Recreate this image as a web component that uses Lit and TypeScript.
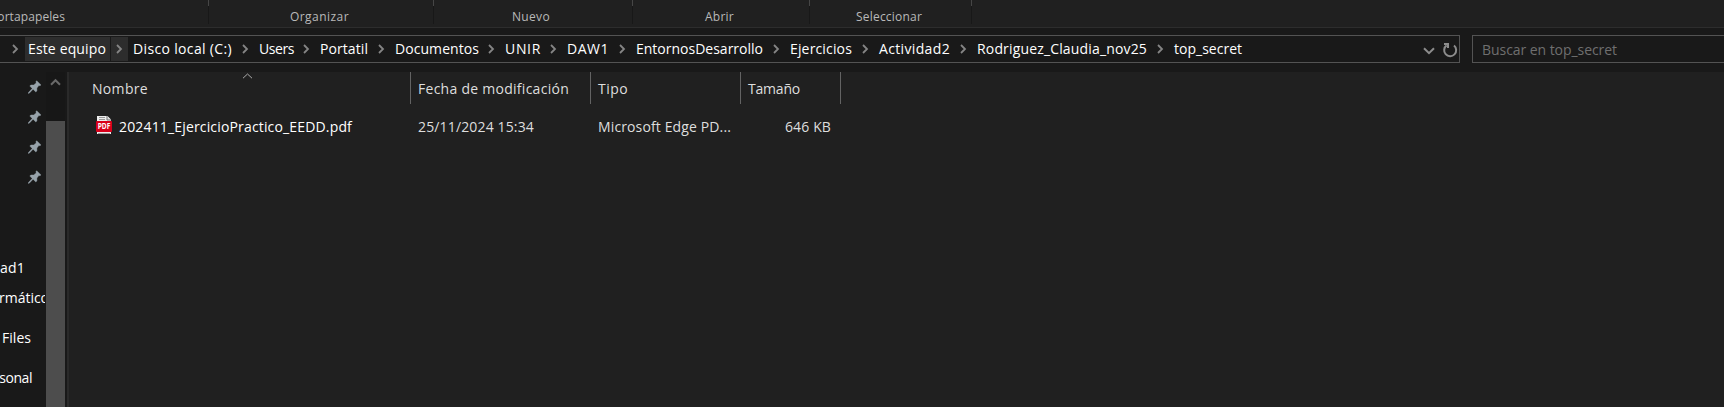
import { LitElement, html, css, svg } from "lit";
import { customElement, property } from "lit/decorators.js";

/** A line of text whose letter spacing is tuned to fill a given advance. */
@customElement("fit-text")
class FitText extends LitElement {
  static styles = css`
    :host { display: block; flex: none; white-space: pre; }
    span { display: inline-block; }
  `;
  @property() text = "";
  @property({ type: Number }) fit = 0;
  updated() {
    const s = this.renderRoot.querySelector("span") as HTMLElement;
    s.style.letterSpacing = "0px";
    const n = s.getBoundingClientRect().width;
    if (this.fit && n) s.style.letterSpacing = `${(this.fit - n) / this.text.length}px`;
  }
  render() { return html`<span>${this.text}</span>`; }
}

const groups = [
  { t: "Portapapeles", w: 209, f: 75, l: -10 },
  { t: "Organizar", w: 225, f: 59, l: 81 },
  { t: "Nuevo", w: 199, f: 38, l: 78 },
  { t: "Abrir", w: 177, f: 29, l: 72 },
  { t: "Seleccionar", w: 162, f: 66, l: 46 },
];
const crumbs = [
  { t: "Este equipo", x: 28, f: 78 },
  { t: "Disco local (C:)", x: 133, f: 99 },
  { t: "Users", x: 259, f: 35 },
  { t: "Portatil", x: 320, f: 48 },
  { t: "Documentos", x: 395, f: 84 },
  { t: "UNIR", x: 505, f: 36 },
  { t: "DAW1", x: 567, f: 42 },
  { t: "EntornosDesarrollo", x: 636, f: 127 },
  { t: "Ejercicios", x: 790, f: 62 },
  { t: "Actividad2", x: 879, f: 71 },
  { t: "Rodriguez_Claudia_nov25", x: 977, f: 170 },
  { t: "top_secret", x: 1174, f: 68 },
];
const side = [
  { t: "ad1", f: 25, l: 0, h: 30 },
  { t: "rmático", f: 50, l: -1, h: 40 },
  { t: "Files", f: 29, l: 2, h: 40 },
  { t: "rsonal", f: 38, l: -6, h: 40 },
];

const chevron = svg`<svg width="7" height="10" viewBox="0 0 7 10"><path d="M1 1l4 4-4 4" fill="none" stroke="#858585" stroke-width="1.8"/></svg>`;
const pin = svg`<svg width="14" height="14" viewBox="0 0 14 14"><path d="M8.7 0.7L13 4.9L11.9 5.7L10.9 5.5L8.9 8L8.9 11L7.8 11.9L5.1 9.3L1 13.4L0.3 13.3L0.4 12.6L4.2 8.5L1.8 6L2.8 5L5.7 4.9L8.2 2.9L8 1.5Z" fill="#98a3ab" stroke="#98a3ab" stroke-width=".4"/></svg>`;

@customElement("app-root")
class AppRoot extends LitElement {
  static styles = css`
    :host { display: flex; flex-direction: column; height: 407px; overflow: hidden; background: #202020;
      color: #fff; font: 14px/20px "Open Sans", "Noto Sans", sans-serif; }
    * { box-sizing: border-box; }
    svg { display: block; flex: none; }
    .ribbon { height: 28px; display: flex; border-bottom: 1px solid #2d2d2d; background: #202020; font-size: 12px; color: #b9b9b9; flex: none; }
    .group { display: flex; justify-content: space-between; padding-top: 7px; }
    .rule { width: 1px; height: 24px; margin-top: -7px; background: linear-gradient(#464646 6px, #181818 6px); }
    .nav { height: 44px; flex: none; display: flex; padding-top: 7px; background: #191919; }
    .address { width: 1460px; height: 28px; border: 1px solid #535353; border-left: 0; display: flex; }
    .lead { width: 25px; padding: 8px 0 0 12px; }
    .crumb { display: flex; height: 24px; margin-top: 1px; padding: 2px 7px 0 3px; }
    .crumb.hot { background: linear-gradient(90deg, #2d2d2d 85px, #191919 85px, #191919 86px, #2d2d2d 86px, #2d2d2d 103px, #191919 103px); }
    .crumb svg { margin: 5px 0 0 auto; }
    .tools { margin-left: auto; display: flex; padding-right: 1px; }
    .down { margin: 11px 7px 0 0; }
    .reload { margin-top: 6px; }
    .search { flex: 1; margin-left: 12px; height: 28px; border: 1px solid #535353; border-right: 0; padding: 4px 0 0 9px; color: #6f6f6f; }
    .body { display: flex; flex: 1; min-height: 0; }
    .tree { width: 45px; background: #191919; overflow: hidden; }
    .pins { padding: 8px 0 0 28px; height: 186px; display: flex; flex-direction: column; gap: 16px; }
    .scroll { width: 22px; padding-left: 1px; background: #191919; border-right: 2px solid #191919; display: flex; flex-direction: column; }
    .scroll > div { background: #171717; height: 49px; padding: 6px 0 0 4px; flex: none; }
    .scroll > i { flex: 1; background: #4d4d4d; }
    .edge { width: 2px; background: #2a2a2a; }
    .list { flex: 1; }
    .head { display: flex; height: 32px; color: #dedede; }
    .col { border-right: 1px solid #636363; padding: 7px 0 0 7px; display: flex; }
    .name { width: 342px; padding-left: 23px; }
    .sort { margin: -6px 0 0 94px; }
    .row { display: flex; height: 38px; padding: 13px 0 0 27px; color: #dedede; }
    .file { width: 322px; display: flex; gap: 6px; color: #fff; }
    .file svg { margin-top: -1px; }
    .file fit-text { margin-left: 1px; }
    .date { width: 180px; }
    .type { width: 187px; }
  `;
  render() {
    return html`
      <div class="ribbon">${groups.map((g) => html`<div class="group" style="width:${g.w - Math.min(g.l, 0)}px;padding-left:${Math.max(g.l, 0)}px;margin-left:${Math.min(g.l, 0)}px"><fit-text .text=${g.t} .fit=${g.f}></fit-text><i class="rule"></i></div>`)}</div>
      <div class="nav">
        <div class="address">
          <div class="lead">${chevron}</div>
          ${crumbs.map((c, i) => {
            const next = crumbs[i + 1];
            return html`<div class="crumb ${i ? "" : "hot"}" style="width:${next ? next.x - c.x : 80}px"><fit-text .text=${c.t} .fit=${c.f}></fit-text>${next ? chevron : ""}</div>`;
          })}
          <div class="tools">
            <svg class="down" width="12" height="8" viewBox="0 0 12 8"><path d="M1 1.2l5 5 5-5" fill="none" stroke="#8c8c8c" stroke-width="2"/></svg>
            <svg class="reload" width="16" height="16" viewBox="0 0 16 16"><path d="M4.6 3.4A6 6 0 1 0 12 3.6M2 1.9H6V6" fill="none" stroke="#8c8c8c" stroke-width="2"/></svg>
          </div>
        </div>
        <div class="search"><fit-text .text=${"Buscar en top_secret"} .fit=${135}></fit-text></div>
      </div>
      <div class="body">
        <div class="tree">
          <div class="pins">${[0, 1, 2, 3].map(() => pin)}</div>
          ${side.map((s) => html`<div style="height:${s.h}px;padding-left:${Math.max(s.l, 0)}px;margin-left:${Math.min(s.l, 0)}px"><fit-text .text=${s.t} .fit=${s.f}></fit-text></div>`)}
        </div>
        <div class="scroll"><div><svg width="11" height="8" viewBox="0 0 11 8"><path d="M1 6.8L5.5 2.2 10 6.8" fill="none" stroke="#696969" stroke-width="2"/></svg></div><i></i></div>
        <div class="edge"></div>
        <div class="list">
          <div class="head">
            <div class="col name"><fit-text .text=${"Nombre"} .fit=${56}></fit-text><svg class="sort" width="11" height="6" viewBox="0 0 11 6"><path d="M1 5.2L5.5 1 10 5.2" fill="none" stroke="#aaa"/></svg></div>
            <div class="col" style="width:180px"><fit-text .text=${"Fecha de modificación"} .fit=${151}></fit-text></div>
            <div class="col" style="width:150px"><fit-text .text=${"Tipo"} .fit=${30}></fit-text></div>
            <div class="col" style="width:100px"><fit-text .text=${"Tamaño"} .fit=${52}></fit-text></div>
          </div>
          <div class="row">
            <div class="file">
              <svg width="16" height="18" viewBox="0 0 16 18"><path d="M1 0H11.5L15 3.5V18H1Z" fill="#eee"/><path d="M11 0V4H15" fill="#ddd" stroke="#777"/><path d="M3 1.5H9M3 3.5H9M2 17.5H14" stroke="#999"/><rect y="5" width="16" height="11" rx="1" fill="#d8001b"/><text x="8" y="13.2" text-anchor="middle" textLength="12.6" lengthAdjust="spacingAndGlyphs" font-size="8" font-weight="700" fill="#fff">PDF</text></svg>
              <fit-text .text=${"202411_EjercicioPractico_EEDD.pdf"} .fit=${233}></fit-text>
            </div>
            <div class="date"><fit-text .text=${"25/11/2024 15:34"} .fit=${116}></fit-text></div>
            <div class="type"><fit-text .text=${"Microsoft Edge PD..."} .fit=${133}></fit-text></div>
            <fit-text .text=${"646 KB"} .fit=${46}></fit-text>
          </div>
        </div>
      </div>`;
  }
}
